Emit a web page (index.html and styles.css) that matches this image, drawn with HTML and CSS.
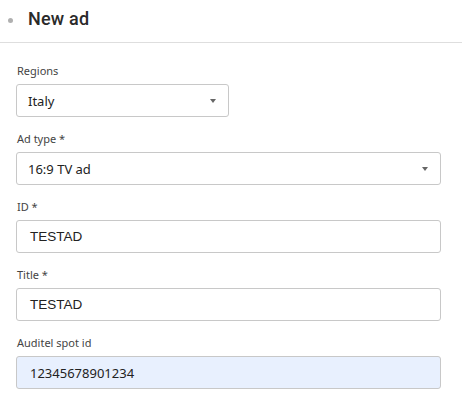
FILE: index.html
```html
<!DOCTYPE html>
<html>
<head>
<meta charset="utf-8">
<link rel="stylesheet" href="styles.css">
</head>
<body>
<header class="header">
  <span class="dot"></span>
  <h1 class="title">New ad</h1>
</header>
<form class="form">
  <div class="field">
    <div class="label">Regions</div>
    <div class="control select narrow"><span>Italy</span><span class="caret"></span></div>
  </div>
  <div class="field">
    <div class="label">Ad type *</div>
    <div class="control select"><span>16:9 TV ad</span><span class="caret"></span></div>
  </div>
  <div class="field">
    <div class="label">ID *</div>
    <div class="control"><span class="val">TESTAD</span></div>
  </div>
  <div class="field">
    <div class="label">Title *</div>
    <div class="control"><span class="val">TESTAD</span></div>
  </div>
  <div class="field">
    <div class="label">Auditel spot id</div>
    <div class="control filled"><span class="val">12345678901234</span></div>
  </div>
</form>
</body>
</html>
```

FILE: styles.css
```css
* { box-sizing: border-box; }
html, body { margin: 0; padding: 0; background: #fff; }
body { font-family: "Noto Sans", "Liberation Sans", sans-serif; color: #222; width: 462px; height: 394px; overflow: hidden; }

.header {
  height: 43px;
  border-bottom: 1px solid #dedede;
  display: flex;
  align-items: center;
  padding-left: 8px;
}
.dot {
  width: 5px; height: 5px; border-radius: 50%;
  background: #b0b0b0;
  margin-right: 15px;
  margin-top: -2px;
}
.title {
  margin: 0;
  font-family: Roboto, "Liberation Sans", sans-serif;
  font-weight: 500;
  font-size: 18px;
  color: #2a2a2a;
  letter-spacing: 0.2px;
  line-height: 24px;
  margin-top: -4px;
}

.form {
  padding: 20px 21px 0 16px;
  display: flex;
  flex-direction: column;
  gap: 14px;
}
.label {
  font-size: 11px;
  line-height: 16px;
  color: #444;
  margin-bottom: 5px;
  padding-left: 1px;
}
.control {
  height: 33px;
  border: 1px solid #c8c8c8;
  border-radius: 3px;
  display: flex;
  align-items: center;
  justify-content: space-between;
  padding: 0 11px 0 11px;
  font-size: 13px;
  color: #222;
  background: #fff;
}
.narrow { width: 213px; }
.select { padding-right: 12px; }
.val { font-family: "Liberation Sans", Arial, sans-serif; font-size: 13.5px; padding-left: 2px; }
.filled { background: #e8f0fe; }
.filled .val { font-family: "Noto Sans", sans-serif; font-size: 13px; padding-left: 2px; }
.caret {
  width: 0; height: 0;
  border-left: 3.5px solid transparent;
  border-right: 3.5px solid transparent;
  border-top: 4px solid #666;
}
```
